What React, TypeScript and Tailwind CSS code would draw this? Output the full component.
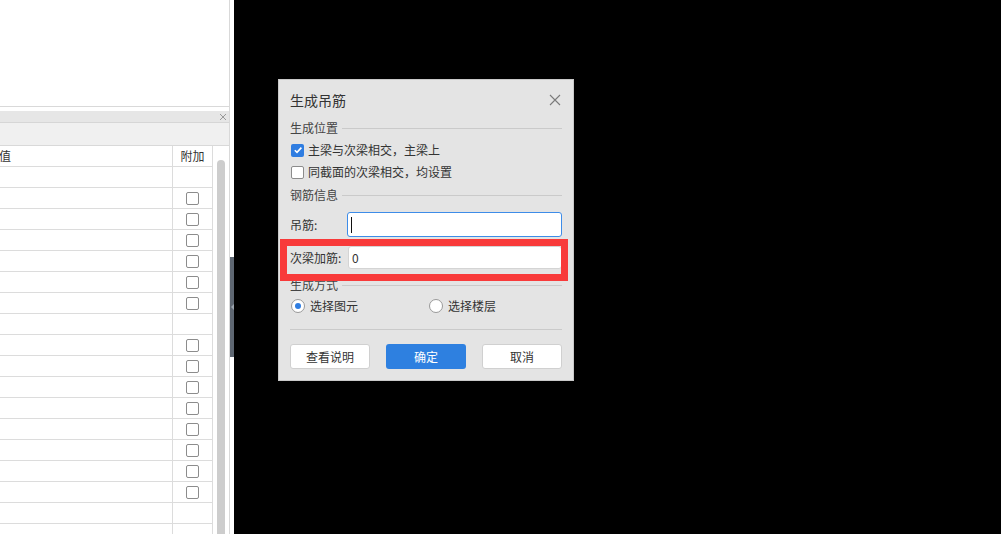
import React from "react"

const rows = [false, true, true, true, true, true, true, false, true, true, true, true, true, true, true, true, false, false]

const Box = ({ checked }: { checked?: boolean }) => {
  if (checked) {
    return (
      <div className="w-[13px] h-[13px] rounded-[2px] bg-[#2f7de1] flex items-center justify-center shrink-0">
        <svg width="10" height="10" viewBox="0 0 10 10">
          <path d="M1.8 5.2 L4 7.4 L8.4 2.6" fill="none" stroke="#fff" strokeWidth="1.6" />
        </svg>
      </div>
    )
  }
  return <div className="w-[13px] h-[13px] rounded-[2px] bg-white border border-[#8c8c8c] shrink-0" />
}

const Radio = ({ on }: { on?: boolean }) => (
  <div className="w-[14px] h-[14px] rounded-full bg-white border border-[#999] flex items-center justify-center shrink-0">
    {on && <div className="w-[6px] h-[6px] rounded-full bg-[#2f7de1]" />}
  </div>
)

const Section = ({ title }: { title: string }) => (
  <div className="h-[16px] flex items-center text-[12px] leading-[16px] text-[#444]">
    <span>{title}</span>
    <div className="flex-1 ml-[4px] h-px bg-[#cacaca]" />
  </div>
)

const LeftPanel = () => (
  <div className="flex h-full shrink-0">
    <div className="w-[230px] h-full bg-white border-r border-[#d9d9d9] flex flex-col overflow-hidden">
      <div className="h-[107px] border-b border-[#d9d9d9] shrink-0" />
      <div className="h-[4px] shrink-0" />
      <div className="h-[12px] bg-[#e6e6e6] border-b border-[#d6d6d6] shrink-0 flex items-center justify-end pr-[2px]">
        <svg width="8" height="8" viewBox="0 0 8 8">
          <path d="M1 1 L7 7 M7 1 L1 7" stroke="#999" strokeWidth="1" />
        </svg>
      </div>
      <div className="h-[23px] bg-[#f0f0f0] border-b border-[#d9d9d9] shrink-0" />
      <div className="flex flex-1 overflow-hidden">
        <div className="w-[213px] border-r border-[#dcdcdc] flex flex-col">
          <div className="h-[21px] flex border-b border-[#dcdcdc] text-[12px] text-[#333] leading-[20px] shrink-0">
            <div className="w-[173px] border-r border-[#dcdcdc] overflow-hidden">
              <span className="ml-[-1px]">值</span>
            </div>
            <div className="flex-1 text-center">附加</div>
          </div>
          {rows.map((c, i) => (
            <div key={i} className="h-[21px] flex border-b border-[#dcdcdc] shrink-0">
              <div className="w-[173px] border-r border-[#dcdcdc]" />
              <div className="flex-1 flex items-center justify-center">{c && <Box />}</div>
            </div>
          ))}
        </div>
        <div className="w-[16px] pl-[4px] pt-[14px]">
          <div className="w-[8px] h-[500px] rounded-t-full bg-[#cdcdcd]" />
        </div>
      </div>
    </div>
    <div className="w-[4px] h-full bg-white flex flex-col">
      <div className="mt-[257px] h-[100px] bg-[#5e6772] flex items-center justify-center">
        <div className="w-0 h-0 border-y-[3px] border-y-transparent border-r-[3px] border-r-[#9aa3ad]" />
      </div>
    </div>
  </div>
)

const Dialog = () => (
  <div className="absolute left-[278px] top-[79px] w-[296px] h-[302px] bg-[#e4e4e4] border border-[#c9c9c9] px-[11px] flex flex-col text-[#333]">
    <div className="h-[40px] flex items-center justify-between shrink-0">
      <span className="text-[14px] leading-[20px] text-[#333]">生成吊筋</span>
      <svg width="12" height="12" viewBox="0 0 12 12" className="mr-[1px]">
        <path d="M1 1 L11 11 M11 1 L1 11" stroke="#7a7a7a" strokeWidth="1.1" />
      </svg>
    </div>
    <Section title="生成位置" />
    <div className="mt-[3px] h-[22px] flex items-center gap-[4px] pl-[1px] text-[12px]">
      <Box checked />
      <span>主梁与次梁相交，主梁上</span>
    </div>
    <div className="h-[22px] flex items-center gap-[4px] pl-[1px] text-[12px]">
      <Box />
      <span>同截面的次梁相交，均设置</span>
    </div>
    <div className="mt-[4px]">
      <Section title="钢筋信息" />
    </div>
    <div className="mt-[9px] h-[25px] flex items-center text-[12px]">
      <span className="w-[57px]">吊筋:</span>
      <div className="flex-1 h-full bg-white border border-[#3d8ce8] rounded-[3px] flex items-center pl-[3px]">
        <div className="w-px h-[16px] bg-[#111]" />
      </div>
    </div>
    <div className="mt-[9px] h-[23px] flex items-center text-[12px]">
      <span className="w-[58px]">次梁加筋:</span>
      <div className="flex-1 h-full bg-white border border-[#d4d4d4] rounded-[3px] flex items-center pl-[3px] text-[#333]">0</div>
    </div>
    <div className="mt-[8px]">
      <Section title="生成方式" />
    </div>
    <div className="mt-[2px] h-[22px] flex items-center text-[12px]">
      <div className="w-[139px] flex items-center gap-[5px] pl-[1px]">
        <Radio on />
        <span>选择图元</span>
      </div>
      <div className="flex items-center gap-[5px]">
        <Radio />
        <span>选择楼层</span>
      </div>
    </div>
    <div className="mt-[12px] h-px bg-[#cacaca] shrink-0" />
    <div className="mt-[14px] h-[25px] flex gap-[16px] text-[12px]">
      <div className="w-[80px] h-full bg-white border border-[#d0d0d0] rounded-[3px] flex items-center justify-center">查看说明</div>
      <div className="w-[80px] h-full bg-[#2e80e0] rounded-[3px] flex items-center justify-center text-white">确定</div>
      <div className="w-[80px] h-full bg-white border border-[#d0d0d0] rounded-[3px] flex items-center justify-center">取消</div>
    </div>
  </div>
)

export default function App() {
  return (
    <div className="relative w-[1001px] h-[534px] bg-black flex overflow-hidden font-['Noto_Sans_CJK_SC',sans-serif]">
      <LeftPanel />
      <Dialog />
      <div className="absolute left-[280px] top-[239px] w-[288px] h-[42px] border-[7px] border-[#f83a3a]" />
    </div>
  )
}
